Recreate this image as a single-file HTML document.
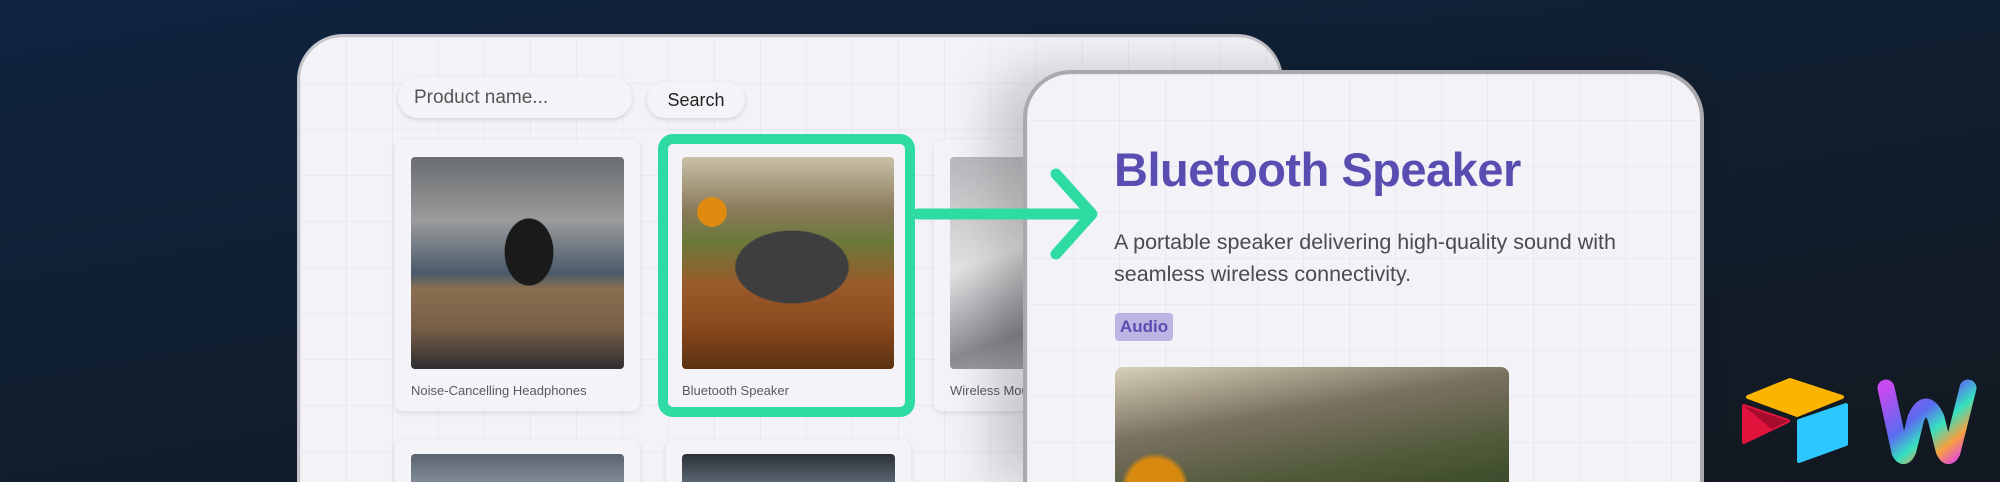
<!DOCTYPE html>
<html><head><meta charset="utf-8"><style>
*{margin:0;padding:0;box-sizing:border-box}
html,body{width:2000px;height:482px;overflow:hidden}
body{font-family:"Liberation Sans",sans-serif;background:#111c2a}
#wrap{position:relative;width:2000px;height:482px;overflow:hidden;background:linear-gradient(170deg,#0f2440 0%,#111d2c 60%,#121820 100%)}
.panel{position:absolute;background-color:#f2f2f7;background-image:linear-gradient(#e8e8f2 1px,transparent 1px),linear-gradient(90deg,#e8e8f2 1px,transparent 1px);background-size:46px 46px;overflow:hidden}
#lp{left:297px;top:34px;width:986px;height:448px;border-radius:46px 46px 0 0;border:3px solid #c4c4ca;border-bottom:none}
#rp{left:1023px;top:70px;width:681px;height:412px;border-radius:48px 48px 0 0;border:4px solid #a9a9ae;border-bottom:none;box-shadow:-30px 0 50px rgba(0,0,0,.18)}
.inp{position:absolute;left:98px;top:40px;width:234px;height:41px;border-radius:21px;background:#f4f4f8;box-shadow:0 2px 5px rgba(0,0,0,.12);font-size:19px;color:#555;padding:10px 16px}
.btn{position:absolute;left:347px;top:45px;width:98px;height:36px;border-radius:18px;background:#f4f4f8;box-shadow:0 2px 5px rgba(0,0,0,.12);font-size:18px;color:#222;text-align:center;line-height:36px}
.card{position:absolute;background:#f3f3f8;border-radius:8px;box-shadow:0 2px 6px rgba(0,0,0,.1)}
.img{position:absolute;border-radius:4px}
.cap{position:absolute;font-size:13px;color:#5a5a60}
</style></head><body><div id="wrap">
<div class="panel" id="lp">
 <div class="inp">Product name...</div>
 <div class="btn">Search</div>
 <div class="card" style="left:95px;top:103px;width:245px;height:271px">
  <div class="img" style="left:16px;top:17px;width:213px;height:212px;background:radial-gradient(ellipse 40px 55px at 118px 95px,#1a1a1a 60%,transparent 62%),linear-gradient(180deg,#6a6d70 0%,#9a9b9c 30%,#4a5a6a 55%,#8a6e50 62%,#7a6048 80%,#2e2e30 100%)"></div>
  <div class="cap" style="left:16px;top:243px">Noise-Cancelling Headphones</div>
 </div>
 <div class="card" style="left:358px;top:97px;width:257px;height:283px;border:10px solid #2edca3;border-radius:15px;box-shadow:none">
  <div class="img" style="left:14px;top:13px;width:212px;height:212px;background:radial-gradient(ellipse 70px 45px at 110px 110px,#3e3e3e 80%,transparent 82%),radial-gradient(circle 18px at 30px 55px,#e08a10 80%,transparent 85%),linear-gradient(180deg,#c8c0a8 0%,#8a7a5a 25%,#6a7a3a 40%,#9a5a2a 60%,#8a4a1e 80%,#5a3010 100%)"></div>
  <div class="cap" style="left:14px;top:239px">Bluetooth Speaker</div>
 </div>
 <div class="card" style="left:634px;top:103px;width:245px;height:271px">
  <div class="img" style="left:16px;top:17px;width:213px;height:212px;background:linear-gradient(160deg,#b8b8bc,#e4e4e6 40%,#8a8a90 70%,#d0d0d4)"></div>
  <div class="cap" style="left:16px;top:243px">Wireless Mouse</div>
 </div>
 <div class="card" style="left:95px;top:403px;width:245px;height:60px">
  <div class="img" style="left:16px;top:14px;width:213px;height:46px;background:linear-gradient(180deg,#5a6470,#9aa4ae)"></div>
 </div>
 <div class="card" style="left:366px;top:403px;width:245px;height:60px">
  <div class="img" style="left:16px;top:14px;width:213px;height:46px;background:linear-gradient(180deg,#2a3038,#7a8694)"></div>
 </div>
</div>
<div class="panel" id="rp">
 <div style="position:absolute;left:87px;top:68px;font-size:47px;font-weight:bold;color:#5a4db2;letter-spacing:-0.5px">Bluetooth Speaker</div>
 <div style="position:absolute;left:87px;top:152px;width:540px;font-size:21.5px;line-height:32px;color:#4a4a50">A portable speaker delivering high-quality sound with seamless wireless connectivity.</div>
 <div style="position:absolute;left:88px;top:239px;width:58px;height:28px;border-radius:4px;background:#bcb5e4;color:#5a4db2;font-weight:bold;font-size:17px;text-align:center;line-height:28px">Audio</div>
 <div style="position:absolute;left:88px;top:293px;width:394px;height:119px;border-radius:8px 8px 0 0;background:radial-gradient(circle 40px at 40px 120px,#d88a10 70%,transparent 85%),linear-gradient(170deg,#d8d0b8 0%,#7a7060 40%,#505a3a 75%,#3a4a2a 100%)"></div>
</div>
<svg style="position:absolute;left:0;top:0" width="2000" height="482">
 <path d="M918 214H1090M1056 174L1092 214L1056 254" fill="none" stroke="#2edca3" stroke-width="11" stroke-linecap="round" stroke-linejoin="round"/>
 <path d="M1748 397L1790 380L1842 397L1797 415Z" fill="#fcb400" stroke="#fcb400" stroke-width="4" stroke-linejoin="round"/>
 <path d="M1744 406L1788 421L1744 442Z" fill="#e0143c" stroke="#e0143c" stroke-width="4" stroke-linejoin="round"/>
 <path d="M1744 406L1788 421L1772 429Z" fill="#a50c2d"/>
 <path d="M1799 421L1846 405V444L1799 461Z" fill="#2dc7ff" stroke="#2dc7ff" stroke-width="4" stroke-linejoin="round"/>
 <defs><linearGradient id="w" x1="0" y1="0" x2="1" y2="1"><stop offset="0" stop-color="#c54af0"/><stop offset=".4" stop-color="#5a6cf0"/><stop offset=".6" stop-color="#36e0c0"/><stop offset=".8" stop-color="#f8a040"/><stop offset="1" stop-color="#e040f0"/></linearGradient></defs>
 <path d="M1886 388L1900 452Q1904 460 1908 450L1916 418Q1926 396 1936 418L1944 450Q1948 460 1952 452L1968 388" fill="none" stroke="url(#w)" stroke-width="17" stroke-linecap="round" stroke-linejoin="round"/>
</svg>
</div></body></html>
